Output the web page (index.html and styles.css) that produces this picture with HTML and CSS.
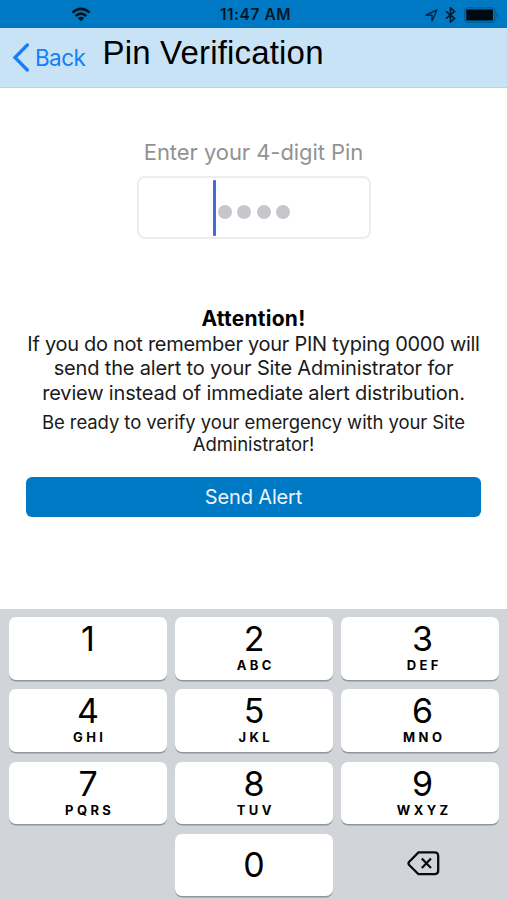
FILE: index.html
```html
<!DOCTYPE html>
<html lang="en">
<head>
<meta charset="utf-8">
<title>Pin Verification</title>
<link rel="stylesheet" href="styles.css">
</head>
<body>
<div class="status">
  <svg class="wifi" width="20" height="15" viewBox="0 0 20 15"><g fill="none" stroke="#001321" stroke-width="2.5"><path d="M1.4 5.6Q10-1.9 18.6 5.6"/><path d="M4.7 9Q10 4.3 15.3 9"/></g><path d="M6.8 11Q10 8.5 13.2 11L10 14.3z" fill="#001321"/></svg>
  <span class="time">11:47 AM</span>
  <div class="indicators">
    <svg width="13" height="13" viewBox="0 0 13 13"><path d="M1 6.2L12 1 7 12V6.2z" fill="none" stroke="#002846" stroke-width="1.4" stroke-linejoin="round"/></svg>
    <svg class="bluetooth" width="11" height="16" viewBox="0 0 11 16"><path d="M1 4.3L9.5 11.5 5.5 15V1L9.5 4.5 1 11.7" fill="none" stroke="#001a2d" stroke-width="1.6"/></svg>
    <svg class="battery" width="36" height="16" viewBox="0 0 36 16"><rect x=".8" y=".8" width="30" height="14.4" rx="2.5" fill="none" stroke="#00538a"/><rect x="2.2" y="2.4" width="26.8" height="11.2" rx=".8" fill="#000a12"/><path d="M32.5 5.5q3 2.3 0 5z" fill="#00538a"/></svg>
  </div>
</div>
<header class="nav">
  <a class="back"><svg width="18" height="29" viewBox="0 0 18 29"><path d="M15.3 2L3 14.5 15.3 27" fill="none" stroke="#147efb" stroke-width="3.3" stroke-linecap="round"/></svg><span>Back</span></a>
  <h1>Pin Verification</h1>
</header>
<main>
  <div class="label">Enter your 4-digit Pin</div>
  <div class="pin"><i class="caret"></i><i class="dot"></i><i class="dot"></i><i class="dot"></i><i class="dot"></i></div>
  <h2>Attention!</h2>
  <p class="notice"><span class="first-line">If you do not remember your PIN typing 0000 will</span><br>send the alert to your Site Administrator for<br>review instead of immediate alert distribution.</p>
  <p class="ready">Be ready to verify your emergency with your Site<br>Administrator!</p>
  <button class="send">Send Alert</button>
</main>
<div class="keypad">
  <div class="key">1</div>
  <div class="key">2<small>ABC</small></div>
  <div class="key right">3<small>DEF</small></div>
  <div class="key">4<small>GHI</small></div>
  <div class="key">5<small>JKL</small></div>
  <div class="key right">6<small>MNO</small></div>
  <div class="key">7<small>PQRS</small></div>
  <div class="key">8<small>TUV</small></div>
  <div class="key right">9<small>WXYZ</small></div>
  <div></div>
  <div class="key zero">0</div>
  <div class="delete"><svg width="33" height="25" viewBox="0 0 33 25"><path d="M11.5 1.4H27.5Q31.2 1.4 31.2 5V19.6Q31.2 23.2 27.5 23.2H11.5L2.2 14Q.8 12.3 2.2 10.7z" fill="none" stroke="#080a0c" stroke-width="2.3" stroke-linejoin="round"/><path d="M14.8 7.6L24 17M24 7.6L14.8 17" stroke="#080a0c" stroke-width="2.2"/></svg></div>
</div>
</body>
</html>
```

FILE: styles.css
```css
* { box-sizing: border-box; }
body { margin: 0; height: 900px; overflow: hidden; display: flex; flex-direction: column; background: #fff; color: #1a1a1a; font-family: Inter, "Liberation Sans", sans-serif; }
svg { display: block; flex: none; }
.status { height: 28px; flex: none; display: grid; grid-template-columns: 1fr auto 1fr; align-items: center; background: #0079c4; color: #001728; padding: 2px 6px 0 0; }
.wifi { margin: -2px 0 0 71px; }
.time { font-size: 15.5px; font-weight: 600; line-height: 20px; letter-spacing: .55px; margin-left: 10px; }
.indicators { display: flex; align-items: center; justify-content: flex-end; }
.indicators .bluetooth { margin: 0 8px 0 7px; }
.battery { margin-right: 1px; }
.nav { height: 60px; flex: none; display: flex; background: #c9e3f6; border-bottom: 1px solid #c3d0d5; }
.back { display: flex; align-items: center; gap: 5px; width: 102.5px; padding-left: 12px; height: 59px; color: #147efb; font-size: 22.5px; letter-spacing: -.6px; }
h1 { margin: 5px 0 0; font: 400 33px/40px "Liberation Sans", Arial, sans-serif; letter-spacing: .18px; color: #000; white-space: nowrap; }
main { flex: none; height: 521px; text-align: center; padding: 50px 26px 0; }
.label { font-size: 22px; line-height: 28px; letter-spacing: -.06px; color: #929292; }
.pin { width: 234px; height: 63px; margin: 10px 0 0 111px; border: 2px solid #ededed; border-radius: 8px; display: flex; align-items: center; padding: 8px 0 0 79px; }
.caret { width: 3px; height: 56px; background: #426bd8; border-radius: 1px; margin: -8px 2px 0 -5px; }
.dot { width: 14px; height: 14px; border-radius: 50%; background: #c7c6cb; margin-right: 5.4px; }
h2 { margin: 67px 0 0; font-size: 21px; line-height: 25px; letter-spacing: .25px; font-weight: 700; color: #000; }
.notice { margin: 1px 0 0; font-size: 20px; line-height: 24.3px; letter-spacing: -.17px; white-space: nowrap; }
.first-line { letter-spacing: -.28px; }
.ready { margin: 6px 0 0; font-size: 18.5px; line-height: 22px; letter-spacing: -.08px; white-space: nowrap; }
.send { display: block; width: 455px; height: 40px; margin: 22px 0 0; border: 0; border-radius: 6px; background: #0079c4; color: #ecf6fc; font: 400 20px/41px Inter, sans-serif; letter-spacing: -.15px; padding: 0; }
.keypad { flex: none; height: 291px; background: #d1d5da; padding: 8px 8px 0 9px; display: grid; grid-template-columns: repeat(3, 158px); grid-auto-rows: 62.6px; gap: 9.7px 8px; }
.key { background: #fff; border-radius: 7px; box-shadow: 0 1.5px 0 #92969b; color: #000; font-size: 34px; font-weight: 400; line-height: 43px; text-align: center; display: flex; flex-direction: column; align-items: center; }
.key.right { padding-left: 5px; }
.key small { font-size: 13px; font-weight: 700; line-height: 16px; letter-spacing: 3.4px; margin: -3px -3.4px 0 0; }
.key.zero { line-height: 61px; }
.delete { display: flex; align-items: center; justify-content: center; padding: 0 0 3px 7px; }
```
